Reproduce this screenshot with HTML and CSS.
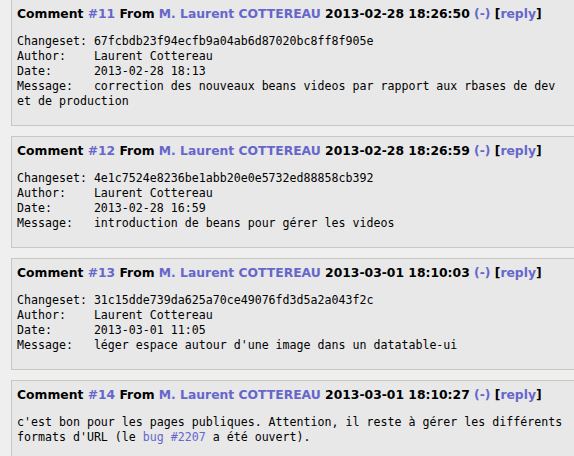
FILE: index.html
```html
<!DOCTYPE html>
<html>
<head>
<meta charset="utf-8">
<link rel="stylesheet" href="styles.css">
</head>
<body>
<div class="comments">
  <div class="comment first">
    <h3 class="head">Comment <a href="#">#11</a> From <a href="#">M. Laurent COTTEREAU</a> 2013-02-28 18:26:50 <a href="#">(-)</a> [<a href="#">reply</a>]</h3>
    <pre class="body">Changeset: 67fcbdb23f94ecfb9a04ab6d87020bc8ff8f905e
Author:    Laurent Cottereau
Date:      2013-02-28 18:13
Message:   correction des nouveaux beans videos par rapport aux rbases de dev et de production</pre>
  </div>
  <div class="comment">
    <h3 class="head">Comment <a href="#">#12</a> From <a href="#">M. Laurent COTTEREAU</a> 2013-02-28 18:26:59 <a href="#">(-)</a> [<a href="#">reply</a>]</h3>
    <pre class="body">Changeset: 4e1c7524e8236be1abb20e0e5732ed88858cb392
Author:    Laurent Cottereau
Date:      2013-02-28 16:59
Message:   introduction de beans pour gérer les videos</pre>
  </div>
  <div class="comment">
    <h3 class="head">Comment <a href="#">#13</a> From <a href="#">M. Laurent COTTEREAU</a> 2013-03-01 18:10:03 <a href="#">(-)</a> [<a href="#">reply</a>]</h3>
    <pre class="body">Changeset: 31c15dde739da625a70ce49076fd3d5a2a043f2c
Author:    Laurent Cottereau
Date:      2013-03-01 11:05
Message:   léger espace autour d'une image dans un datatable-ui</pre>
  </div>
  <div class="comment">
    <h3 class="head">Comment <a href="#">#14</a> From <a href="#">M. Laurent COTTEREAU</a> 2013-03-01 18:10:27 <a href="#">(-)</a> [<a href="#">reply</a>]</h3>
    <pre class="body">c'est bon pour les pages publiques. Attention, il reste à gérer les différents formats d'URL (le <a href="#">bug #2207</a> a été ouvert).</pre>
  </div>
</div>
</body>
</html>
```
FILE: styles.css
```css
html {
  overflow: hidden;
  background: #efefef;
}
body {
  margin: 0;
  background: #efefef;
  color: #000;
}
.comments {
  display: flex;
  flex-direction: column;
  gap: 10px;
  padding-left: 11px;
}
.comment {
  width: 553px;
  flex: none;
  background: #e8e8e8;
  border: 1px solid #c8c8c0;
  padding: 6px 5px 16px 5px;
}
.comment.first {
  margin-top: -1px;
}
.head {
  margin: 0 0 12px 0;
  font-family: "DejaVu Sans", Verdana, sans-serif;
  font-weight: bold;
  font-size: 12.35px;
  line-height: 16px;
  white-space: nowrap;
}
a {
  color: #6666cc;
  text-decoration: none;
}
.body {
  margin: 0;
  font-family: "DejaVu Sans Mono", monospace;
  font-size: 11.62px;
  line-height: 15px;
  white-space: pre-wrap;
}
```
